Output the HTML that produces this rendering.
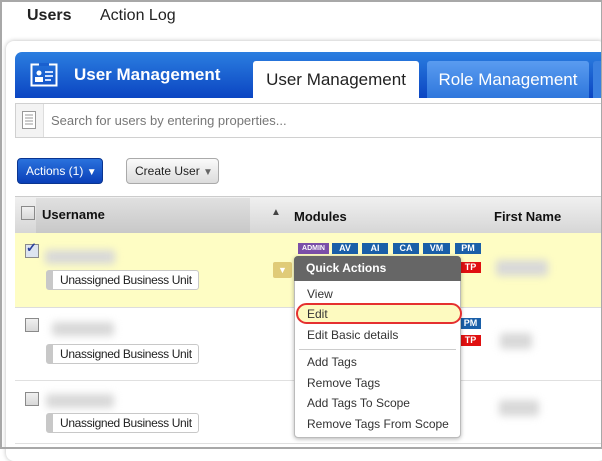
<!DOCTYPE html>
<html><head><meta charset="utf-8"><style>
*{margin:0;padding:0;box-sizing:border-box}
body{width:602px;height:449px;overflow:hidden;background:#fff;font-family:"Liberation Sans",Arial,sans-serif;position:relative}
.a{position:absolute;white-space:nowrap}
.frame{left:0;top:0;width:602px;height:449px;border:2px solid #a8a8a8;border-right:1px solid #a8a8a8}
.cb{position:absolute;width:14px;height:14px;border:1px solid #8a8a8a;background:linear-gradient(#f0f0f0,#d8d8d8)}
.bu{position:absolute;left:46px;width:153px;height:20px;border:1px solid #c8c8c8;border-left:7px solid #c8c8c8;border-radius:3px;background:#fff;font-size:12px;color:#222;padding-left:7px;line-height:18px;white-space:nowrap;letter-spacing:-0.35px}
.blur{position:absolute;background:#d8d8d8;filter:blur(4px);border-radius:3px}
.bd{position:absolute;height:11px;background:#1a5fa8;color:#fff;font-size:9px;font-weight:bold;text-align:center;line-height:11px}
.mi{position:absolute;left:307px;font-size:12px;color:#333;white-space:nowrap}
</style></head><body>
<div class="a" style="left:27px;top:7px;font-size:16px;font-weight:bold;color:#222">Users</div>
<div class="a" style="left:100px;top:7px;font-size:16px;color:#222">Action Log</div>
<div class="a" style="left:6px;top:41px;width:600px;height:420px;border-radius:8px;box-shadow:0 0 5px #bbb;background:#fff"></div>
<div class="a" style="left:15px;top:52px;width:586px;height:46px;border-radius:7px 0 0 0;background:linear-gradient(#2b7ee0,#0b45c2)"></div>
<svg class="a" style="left:30px;top:63px" width="28" height="24" viewBox="0 0 28 24"><rect x="1.5" y="1.5" width="25" height="21" fill="none" stroke="#fff" stroke-width="2"/><rect x="9" y="0" width="10" height="3" fill="#1a60cf"/><circle cx="9" cy="10" r="2.5" fill="#fff"/><rect x="5" y="14" width="8" height="5" fill="#fff"/><rect x="15" y="8" width="8" height="2" fill="#cfe0ff"/><rect x="15" y="12" width="8" height="2" fill="#cfe0ff"/><rect x="15" y="16" width="6" height="2" fill="#cfe0ff"/></svg>
<div class="a" style="left:74px;top:65px;font-size:17px;font-weight:bold;color:#fff">User Management</div>
<div class="a" style="left:253px;top:61px;width:166px;height:37px;background:#fff;border-radius:3px 3px 0 0;font-size:17px;color:#222;text-align:center;line-height:37px">User Management</div>
<div class="a" style="left:427px;top:61px;width:162px;height:37px;background:linear-gradient(#5a9cf0,#2f77dc);border-radius:3px 3px 0 0;font-size:17px;color:#fff;text-align:center;line-height:37px">Role Management</div>
<div class="a" style="left:593px;top:61px;width:10px;height:37px;background:#3a80e0;border-radius:3px 0 0 0"></div>
<div class="a" style="left:15px;top:103px;width:588px;height:35px;border:1px solid #d0d0d0;background:#fff"></div>
<div class="a" style="left:16px;top:104px;width:28px;height:33px;background:#f3f3f3;border-right:1px solid #ddd"></div>
<svg class="a" style="left:22px;top:111px" width="14" height="18"><rect x="0.5" y="0.5" width="13" height="17" fill="#fff" stroke="#999"/><path d="M3 4h8M3 7h8M3 10h8M3 13h8" stroke="#999"/></svg>
<div class="a" style="left:51px;top:113px;font-size:13px;color:#777">Search for users by entering properties...</div>
<div class="a" style="left:17px;top:158px;width:86px;height:26px;border-radius:4px;background:linear-gradient(#2a72dd,#0a3fb8);border:1px solid #0a3590;color:#fff;font-size:12px;line-height:24px;padding-left:8px">Actions (1) <span style="font-size:10px">&#9660;</span></div>
<div class="a" style="left:126px;top:158px;width:93px;height:26px;border-radius:4px;background:linear-gradient(#fafafa,#dcdcdc);border:1px solid #aaa;color:#222;font-size:12px;line-height:24px;padding-left:8px">Create User <span style="font-size:10px;color:#666">&#9660;</span></div>
<div class="a" style="left:15px;top:196px;width:588px;height:37px;background:linear-gradient(#f0f0f0,#d6d6d6);border-top:1px solid #ccc"></div>
<div class="a" style="left:36px;top:198px;width:214px;height:35px;background:linear-gradient(#e0e0e0,#c8c8c8)"></div>
<div class="cb" style="left:21px;top:206px"></div>
<div class="a" style="left:42px;top:207px;font-size:13px;font-weight:bold;color:#111">Username</div>
<div class="a" style="left:271px;top:207px;font-size:10px;color:#444">&#9650;</div>
<div class="a" style="left:294px;top:209px;font-size:13px;font-weight:bold;color:#111">Modules</div>
<div class="a" style="left:494px;top:209px;font-size:13px;font-weight:bold;color:#111">First Name</div>
<div class="a" style="left:15px;top:233px;width:588px;height:75px;background:#fefdc4;border-bottom:1px solid #ddd"></div>
<div class="a" style="left:15px;top:380px;width:588px;height:1px;background:#e0e0e0"></div>
<div class="a" style="left:15px;top:443px;width:588px;height:1px;background:#e0e0e0"></div>
<div class="cb" style="left:25px;top:244px;background:#dde4f0"></div>
<div class="a" style="left:26px;top:240px;font-size:13px;color:#2a3f9a;font-weight:bold">✓</div>
<div class="blur" style="left:45px;top:250px;width:70px;height:14px"></div>
<div class="bu" style="top:270px">Unassigned Business Unit</div>
<div class="cb" style="left:25px;top:318px"></div>
<div class="blur" style="left:52px;top:322px;width:62px;height:14px"></div>
<div class="bu" style="top:344px">Unassigned Business Unit</div>
<div class="cb" style="left:25px;top:392px"></div>
<div class="blur" style="left:46px;top:394px;width:68px;height:14px"></div>
<div class="bu" style="top:413px">Unassigned Business Unit</div>
<div class="blur" style="left:496px;top:260px;width:52px;height:16px"></div>
<div class="blur" style="left:500px;top:333px;width:32px;height:16px"></div>
<div class="blur" style="left:499px;top:400px;width:40px;height:16px"></div>
<div class="bd" style="left:298px;top:243px;width:31px;background:#7b4fa8;font-size:7px">ADMIN</div>
<div class="bd" style="left:332px;top:243px;width:26px">AV</div>
<div class="bd" style="left:362px;top:243px;width:26px">AI</div>
<div class="bd" style="left:393px;top:243px;width:26px">CA</div>
<div class="bd" style="left:423px;top:243px;width:27px">VM</div>
<div class="bd" style="left:455px;top:243px;width:26px">PM</div>
<div class="bd" style="left:460px;top:262px;width:21px;background:#e01010">TP</div>
<div class="bd" style="left:460px;top:318px;width:21px">PM</div>
<div class="bd" style="left:460px;top:335px;width:21px;background:#e01010">TP</div>
<div class="a" style="left:273px;top:262px;width:19px;height:16px;background:#e0cb78;border-radius:2px;color:#fff;font-size:9px;text-align:center;line-height:16px">&#9660;</div>
<div class="a" style="left:294px;top:256px;width:167px;height:182px;background:#fff;border:1px solid #bbb;border-radius:4px;box-shadow:0 1px 4px rgba(0,0,0,.3)"></div>
<div class="a" style="left:294px;top:256px;width:167px;height:25px;background:#666;border-radius:4px 4px 0 0;color:#fff;font-size:12px;font-weight:bold;line-height:25px;padding-left:12px">Quick Actions</div>
<div class="mi" style="top:287px">View</div>
<div class="a" style="left:296px;top:303px;width:166px;height:21px;border:2px solid #e53030;border-radius:11px;background:#fdfac0"></div>
<div class="mi" style="top:307px">Edit</div>
<div class="mi" style="top:328px">Edit Basic details</div>
<div class="a" style="left:299px;top:349px;width:157px;height:1px;background:#ccc"></div>
<div class="mi" style="top:355px">Add Tags</div>
<div class="mi" style="top:376px">Remove Tags</div>
<div class="mi" style="top:396px">Add Tags To Scope</div>
<div class="mi" style="top:417px">Remove Tags From Scope</div>
<div class="a frame"></div>
</body></html>
